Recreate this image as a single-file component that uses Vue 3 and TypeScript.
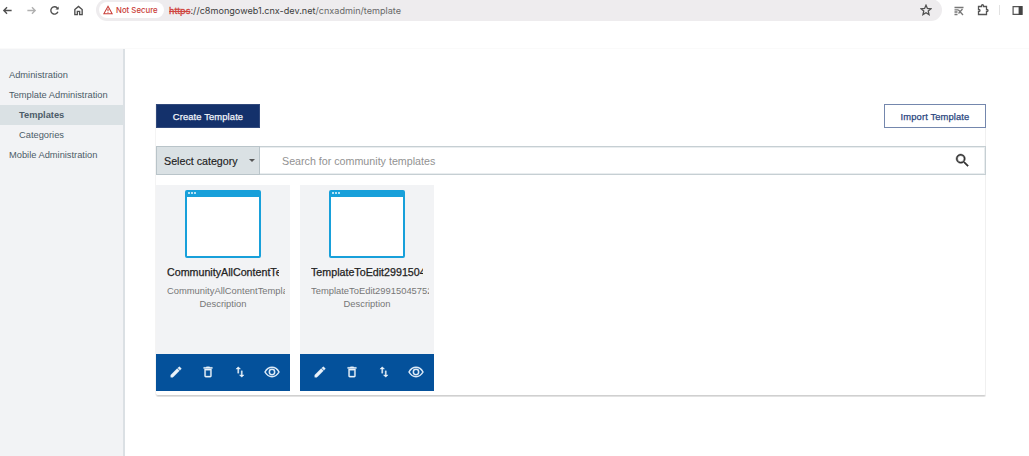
<script setup lang="ts">
interface NavItem {
  label: string
  nested?: boolean
  active?: boolean
}

interface TemplateCard {
  title: string
  text: string
}

const nav: NavItem[] = [
  { label: 'Administration' },
  { label: 'Template Administration' },
  { label: 'Templates', nested: true, active: true },
  { label: 'Categories', nested: true },
  { label: 'Mobile Administration' },
]

const cards: TemplateCard[] = [
  { title: 'CommunityAllContentTemplate', text: 'CommunityAllContentTemplate' },
  { title: 'TemplateToEdit299150457523', text: 'TemplateToEdit299150457523' },
]
</script>

<template>
  <div class="page">
    <header class="browser">
      <svg class="ico back" viewBox="0 0 24 24"><path d="M21 12H4M11 5l-7 7 7 7" /></svg>
      <svg class="ico forward" viewBox="0 0 24 24"><path d="M3 12h17M13 5l7 7-7 7" /></svg>
      <svg class="ico reload" viewBox="0 0 24 24"><path d="M19.5 14.500A8 8 0 1 1 18 6.500L20 8.500" /><path d="M21 3v7h-7z" class="solid" /></svg>
      <svg class="ico home" viewBox="0 0 24 24"><path d="M4 10l8-7 8 7v11h-5.500v-7h-5v7H4z" /></svg>
      <div class="address">
        <span class="secure">
          <svg viewBox="0 0 24 24"><path d="M12 3L22 21H2z" /><path d="M12 9v6M12 16.500v2" /></svg>
          <span>Not Secure</span>
        </span>
        <span class="url"><s>https</s>://c8mongoweb1.cnx-dev.net<span class="path">/cnxadmin/template</span></span>
        <svg class="star" viewBox="0 0 24 24"><path d="M12 2.500l2.800 6.500 7 .6-5.300 4.600 1.600 6.900-6.100-3.700-6.100 3.700 1.600-6.900L2.200 9.600l7-.6z" /></svg>
      </div>
      <svg class="ext-lines" viewBox="0 0 10 10"><path d="M0.500 1.500h9M0.500 3.800h4M0.500 6h3M0.500 8.500h3M4.500 4l4.500 5M8.500 3L4.500 7.500" /></svg>
      <svg class="ext-puzzle" viewBox="0 0 24 24"><path d="M3 5h6V3.500a2 2 0 0 1 4 0V5h6v6h1a2 2 0 0 1 0 4h-1v6H3v-6h1a2 2 0 0 0 0-4H3z" /></svg>
      <span class="divider"></span>
      <svg class="side-panel" viewBox="0 0 10 10"><path d="M1 1.500h8v7H1z" /><path d="M6 1h3.500v8H6z" class="solid" /></svg>
    </header>

    <div class="body">
      <nav class="sidebar">
        <a v-for="item in nav" :key="item.label" :class="{ nested: item.nested, active: item.active }"><span>{{ item.label }}</span></a>
      </nav>

      <main class="main">
        <section class="panel">
          <div class="actions">
            <button class="btn primary">Create Template</button>
            <button class="btn outline">Import Template</button>
          </div>
          <div class="search">
            <div class="select"><span>Select category</span><i></i></div>
            <span class="placeholder">Search for community templates</span>
            <svg viewBox="0 0 24 24"><path d="M15.500 14h-.8l-.3-.3A6.500 6.500 0 1 0 13.700 14.400l.3.300v.8l5 5 1.500-1.500zm-6 0a4.500 4.500 0 1 1 0-9 4.500 4.500 0 0 1 0 9z" /></svg>
          </div>
          <div class="cards">
            <article v-for="card in cards" :key="card.title" class="card">
              <div class="thumb"><b></b><b></b><b></b></div>
              <h3>{{ card.title }}</h3>
              <p>{{ card.text }}</p>
              <p class="desc">Description</p>
              <footer>
                <svg viewBox="0 0 24 24"><path d="M3 17.250V21h3.750L17.810 9.940l-3.750-3.750zM20.710 7.040a1 1 0 0 0 0-1.410l-2.340-2.340a1 1 0 0 0-1.410 0l-1.830 1.830 3.750 3.750z" /></svg>
                <svg viewBox="0 0 24 24"><path d="M6 19c0 1.100.9 2 2 2h8c1.100 0 2-.9 2-2V7H6zM8 9h8v10H8zM15.500 4l-1-1h-5l-1 1H4.500v2h15V4z" /></svg>
                <svg viewBox="0 0 24 24"><path d="M16 17V10h-2v7h-3l4 4 4-4zM9 3L5 7h3v7h2V7h3z" /></svg>
                <svg class="eye" viewBox="0 0 24 24"><path d="M1.500 12C4 7.500 7.500 5 12 5s8 2.500 10.500 7C20 16.500 16.500 19 12 19S4 16.500 1.500 12z" /><circle cx="12" cy="12" r="4" /></svg>
              </footer>
            </article>
          </div>
        </section>
      </main>
    </div>
  </div>
</template>

<style>
html,
body {
  margin: 0;
  background: #fff;
  overflow: hidden;
}
</style>

<style scoped>
* {
  box-sizing: border-box;
}
.page {
  width: 1029px;
  height: 456px;
  display: flex;
  flex-direction: column;
  overflow: hidden;
  font-family: "Liberation Sans", Arial, sans-serif;
}
svg {
  display: block;
  flex: none;
}
.browser {
  height: 49px;
  flex: none;
  display: flex;
  align-items: flex-start;
  border-bottom: 1px solid #fafafa;
}
.ico {
  width: 11px;
  height: 11px;
  margin-top: 5px;
  fill: none;
  stroke: #505050;
  stroke-width: 3;
}
.ico .solid {
  fill: #505050;
  stroke: none;
}
.back {
  margin-left: 2px;
}
.forward {
  margin-left: 13px;
  stroke: #b0b0b0;
}
.reload {
  margin-left: 12px;
}
.home {
  margin-left: 13px;
}
.address {
  width: 846px;
  height: 22px;
  margin: -1px 0 0 12px;
  border-radius: 11px;
  background: #eeecee;
  display: flex;
  align-items: center;
  padding-left: 3px;
}
.secure {
  width: 65px;
  height: 16px;
  border-radius: 8px;
  background: #fff;
  display: flex;
  align-items: center;
  padding-left: 4px;
  color: #c93b35;
  font: 500 7.800px Inter, sans-serif;
  white-space: nowrap;
}
.secure svg {
  width: 10px;
  height: 10px;
  margin-right: 3px;
  fill: none;
  stroke: #c93b35;
  stroke-width: 2.500;
}
.url {
  margin-left: 5px;
  font: 9.100px Inter, sans-serif;
  color: #3c3c3c;
  white-space: nowrap;
}
.url s {
  color: #d0453f;
  -webkit-text-stroke: 0.300px #d0453f;
}
.path {
  color: #686868;
}
.star {
  width: 12px;
  height: 12px;
  margin: 0 10px 0 auto;
  fill: none;
  stroke: #505050;
  stroke-width: 2.600;
}
.ext-lines {
  width: 10px;
  height: 10px;
  margin: 6px 0 0 12px;
  fill: none;
  stroke: #777;
  stroke-width: 1.300;
}
.ext-puzzle {
  width: 12px;
  height: 12px;
  margin: 4px 0 0 13px;
  fill: none;
  stroke: #555;
  stroke-width: 2.600;
}
.divider {
  width: 1px;
  height: 10px;
  margin: 5px 0 0 10px;
  background: #e2e2e2;
}
.side-panel {
  width: 11px;
  height: 11px;
  margin: 5px 0 0 12px;
  fill: none;
  stroke: #555;
  stroke-width: 1.100;
}
.side-panel .solid {
  fill: #444;
  stroke: none;
}
.body {
  flex: 1;
  min-height: 0;
  display: flex;
}
.sidebar {
  width: 125px;
  flex: none;
  padding-top: 16px;
  background: #f2f3f5;
  border-right: 2px solid #dbe0e4;
}
.sidebar a {
  display: flex;
  align-items: center;
  height: 20px;
  padding-left: 9px;
  font-size: 9.300px;
  color: #4c5c68;
  white-space: nowrap;
}
.sidebar .nested {
  padding-left: 19px;
}
.sidebar .active {
  background: #dae1e4;
  font-weight: 700;
}
.main {
  padding: 55px 0 0 31px;
}
.panel {
  width: 830px;
  height: 292px;
  border-right: 1px solid #f0f0f0;
  border-bottom: 1px solid #d0d0d0;
  box-shadow: -1px 0 0 #f4f4f4, 0 1px 0 #e2e2e2;
  border-radius: 0 0 2px 2px;
}
.actions {
  display: flex;
  justify-content: space-between;
}
.btn {
  height: 24px;
  padding: 0;
  font-family: "Liberation Sans", Arial, sans-serif;
  font-size: 9.400px;
  letter-spacing: 0.120px;
}
.primary {
  width: 104px;
  border: 1px solid #31497c;
  background: #14316b;
  color: #f2f5fa;
  -webkit-text-stroke: 0.250px #f2f5fa;
}
.outline {
  width: 102px;
  margin-right: -1px;
  border: 1px solid #7487ad;
  background: #fff;
  color: #2b4680;
  -webkit-text-stroke: 0.250px #2b4680;
}
.search {
  height: 29px;
  margin: 18px -1px 0 0;
  border: 1px solid #c6cfd3;
  box-shadow: inset 0 0 0 1px #e9edef;
  display: flex;
  align-items: center;
}
.select {
  width: 104px;
  height: 29px;
  margin-left: -1px;
  flex: none;
  border: 1px solid #b9c4c9;
  background: #dae1e4;
  display: flex;
  align-items: center;
  justify-content: space-between;
  padding: 0 4px 0 7px;
  font-size: 10.700px;
  color: #222;
  -webkit-text-stroke: 0.150px #222;
  white-space: nowrap;
}
.select i {
  border: 3px solid transparent;
  border-top-color: #555;
  border-bottom: 0;
}
.placeholder {
  margin-left: 22px;
  font-size: 10.700px;
  color: #929292;
}
.search svg {
  width: 17px;
  height: 17px;
  margin: 0 14px 0 auto;
  fill: #333;
  stroke: #333;
  stroke-width: 0.600;
}
.cards {
  display: flex;
  gap: 10px;
  margin-top: 10px;
}
.card {
  width: 134px;
  height: 206px;
  background: #f2f3f5;
  display: flex;
  flex-direction: column;
  align-items: stretch;
  padding-top: 5px;
}
.thumb {
  width: 76px;
  height: 68px;
  margin-left: 29px;
  flex: none;
  border: 2px solid #18a0da;
  border-top-width: 7px;
  border-radius: 2px;
  background: #fff;
  display: flex;
  gap: 1px;
}
.thumb b {
  width: 2px;
  height: 2px;
  margin-top: -5px;
  background: #b5e2f5;
  transform: translateX(1px);
}
.card h3 {
  margin: 7px 11px 0;
  height: 15px;
  font-size: 10.700px;
  line-height: 15px;
  font-weight: 400;
  color: #222;
  -webkit-text-stroke: 0.250px #222;
  white-space: nowrap;
  overflow: hidden;
}
.card p {
  margin: 4px 5px 0 11px;
  height: 13px;
  font-size: 9.400px;
  line-height: 13px;
  color: #777;
  white-space: nowrap;
  overflow: hidden;
}
.card .desc {
  margin: 0 11px;
  text-align: center;
}
.card footer {
  height: 37px;
  margin-top: auto;
  background: #04519b;
  display: flex;
  align-items: center;
  gap: 18px;
  padding-left: 13px;
}
.card footer svg {
  width: 14px;
  height: 14px;
  margin-top: -1px;
  fill: #eaf2fa;
  stroke: #eaf2fa;
  stroke-width: 0.600;
}
.card footer .eye {
  width: 16px;
  height: 16px;
  margin-left: -1px;
  fill: none;
  stroke: #dce9f6;
  stroke-width: 2.300;
}
</style>
